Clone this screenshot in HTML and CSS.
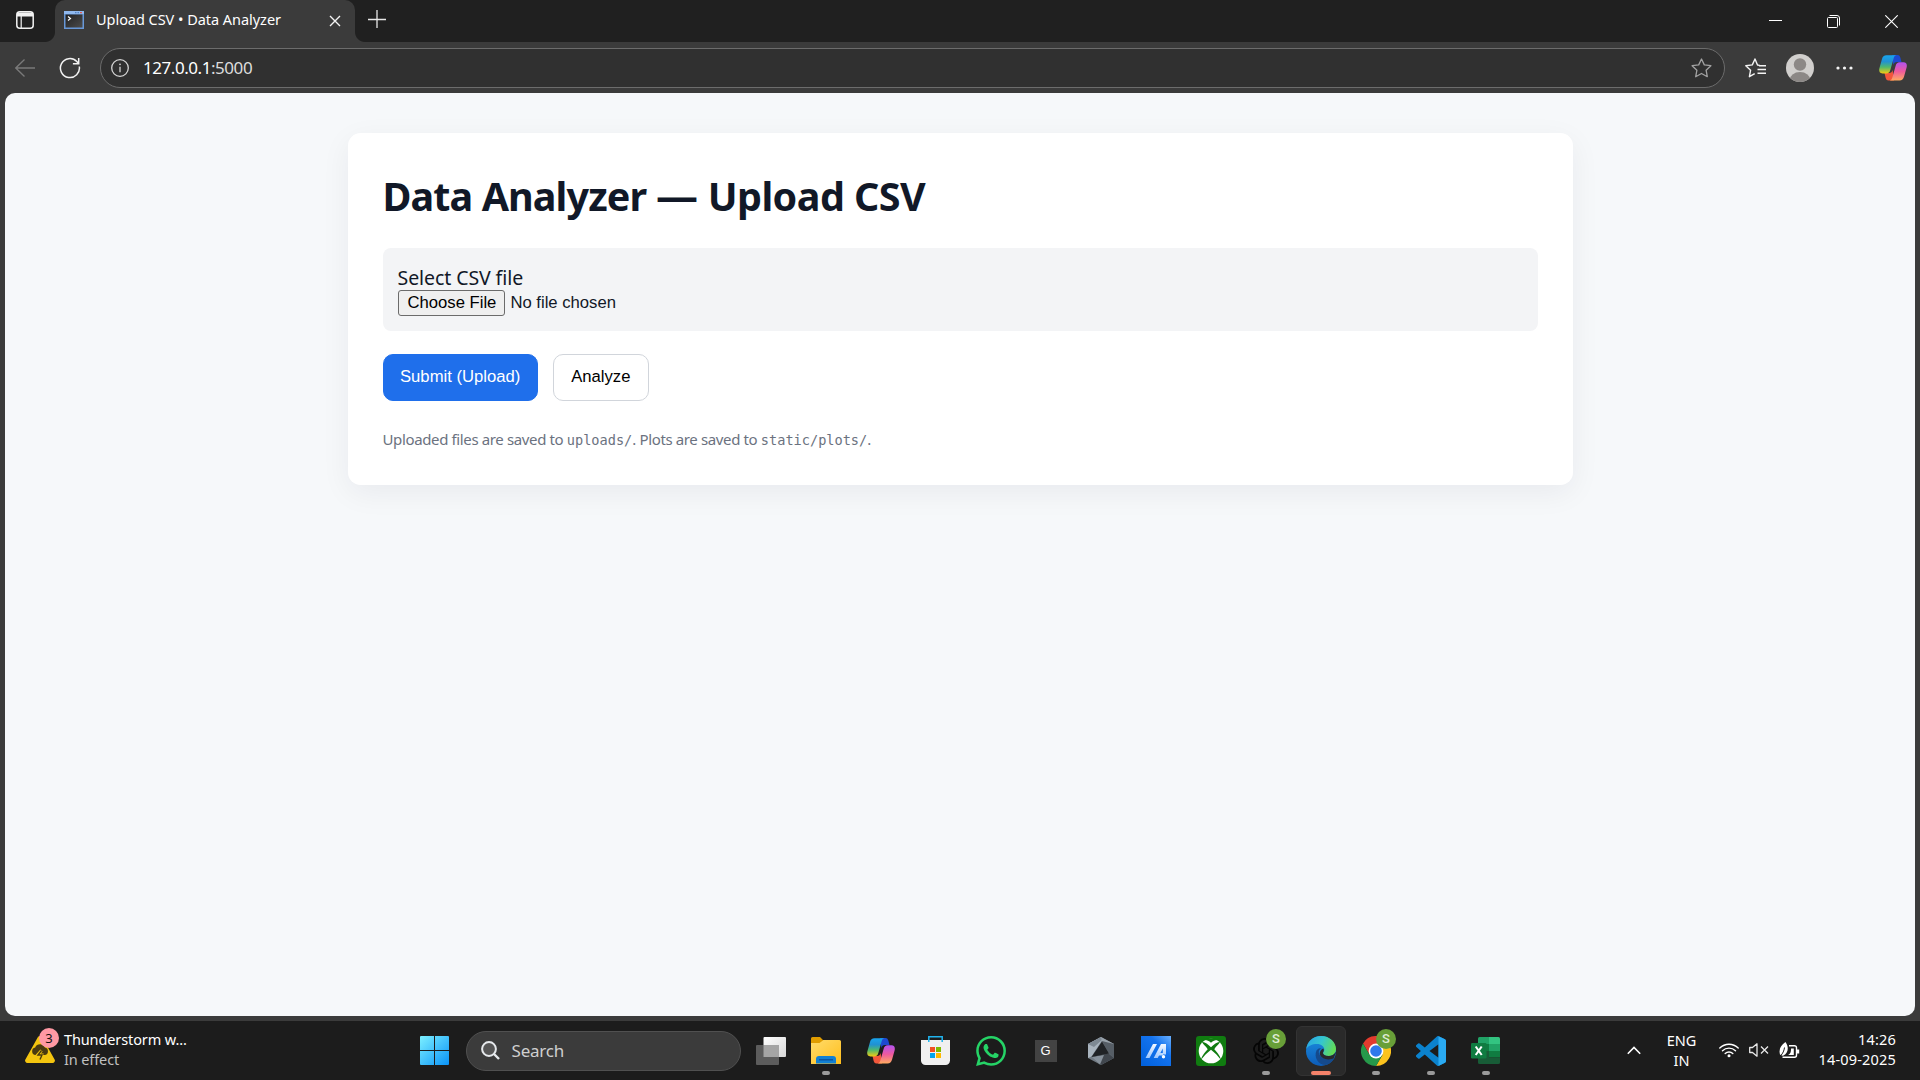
FILE: index.html
```html
<!DOCTYPE html>
<html lang="en">
<head>
<meta charset="utf-8">
<title>Upload CSV • Data Analyzer</title>
<link rel="stylesheet" href="styles.css">
</head>
<body>
<div class="screen">
  <header class="tabbar">
    <div class="tab-actions">
      <svg width="18" height="18" viewBox="0 0 18 18" fill="none" stroke="#f2f2f2"><rect x=".8" y=".8" width="16.4" height="16.4" rx="3" stroke-width="1.5"/><path d="M1 1.5h16v4H1z" fill="#f2f2f2" stroke="none"/><path d="M5.2 5v12" stroke-width="1.2"/></svg>
    </div>
    <div class="tab">
      <svg class="favicon" width="20" height="18" viewBox="0 0 20 18"><defs><linearGradient id="term" x1="0" y1="0" x2="1" y2="1"><stop stop-color="#202020"/><stop offset="1" stop-color="#4c4c4c"/></linearGradient></defs><rect width="20" height="18" fill="#6898d8"/><path d="M0 0h20v3H0z" fill="#8fb8ee"/><path d="M16 1h2v1.3h-2z" fill="#e05a50"/><path d="M11 1h1.5v1.3H11zM13.5 1H15v1.3h-1.5z" fill="#4f7fc0"/><rect x="1.5" y="3.5" width="17" height="13" fill="url(#term)"/><path d="M4 5.5l2.5 2L4 9.5" fill="none" stroke="#fff" stroke-width="1.2"/></svg>
      <span class="tab-title">Upload CSV • Data Analyzer</span>
      <svg class="tab-close" width="12" height="12" viewBox="0 0 12 12" stroke="#f4f4f4" stroke-width="1.4"><path d="M1 1l10 10M11 1L1 11"/></svg>
    </div>
    <svg class="new-tab" width="18" height="18" viewBox="0 0 18 18" stroke="#e8e8e8" stroke-width="1.3"><path d="M9 0v18M0 9.5h18"/></svg>
    <div class="window-controls">
      <svg width="13" height="13" viewBox="0 0 13 13" stroke="#fff" fill="none"><path d="M0 5.5h13"/></svg>
      <svg width="13" height="13" viewBox="0 0 13 13" stroke="#fff" fill="none"><rect x=".5" y="2.5" width="10" height="10" rx="1"/><path d="M2.5.5H10a2.5 2.5 0 0 1 2.5 2.5v7.5"/></svg>
      <svg width="13" height="13" viewBox="0 0 13 13" stroke="#fff" fill="none" stroke-width="1.1"><path d="M.3.3l12.4 12.4M12.7.3L.3 12.7"/></svg>
    </div>
  </header>

  <nav class="toolbar">
    <svg class="back" width="20" height="18" viewBox="0 0 20 18" fill="none" stroke="#7a7a7a" stroke-width="1.3"><path d="M20 9H.8M9.5.5L.8 9l8.7 8.5"/></svg>
    <svg class="reload" width="22" height="22" viewBox="0 0 22 22" fill="none" stroke="#f2f2f2" stroke-width="1.5"><path d="M20.3 9.500A9.500 9.500 0 1 1 17.800 4.500L19.500 6.500M19.700 1v5.800h-5.800"/></svg>
    <div class="address">
      <svg width="18" height="18" viewBox="0 0 18 18" fill="none" stroke="#d4d4d4" stroke-width="1.3"><circle cx="9" cy="9" r="8.3"/><path d="M9 7.8V13.3"/><circle cx="9" cy="5.3" r=".9" fill="#d4d4d4" stroke="none"/></svg>
      <span class="url"><b>127.0.0.1</b><span class="port">:5000</span></span>
      <svg class="star" width="21" height="20" viewBox="0 0 21 20" fill="none" stroke="#a2a2a2" stroke-width="1.3" stroke-linejoin="round"><path d="M10.500 1l2.800 5.900 6.600.8-4.800 4.500 1.200 6.500-5.800-3.200-5.800 3.200 1.200-6.500L1.100 7.700l6.600-.8z"/></svg>
    </div>
    <div class="toolbar-actions">
      <svg class="favorites" width="21" height="20" viewBox="0 0 21 20" fill="none" stroke="#f4f4f4" stroke-width="1.4" stroke-linejoin="round"><path d="M14.500 7.300l-2-.3L10 1 7.300 6.900l-6.500.8 4.800 4.500L4.400 18.700l5.300-3M14 7.800h7M12.500 11.500H21M12.500 15.300H21"/></svg>
      <svg class="avatar" width="28" height="28" viewBox="0 0 28 28"><defs><clipPath id="av"><circle cx="14" cy="14" r="14"/></clipPath></defs><g clip-path="url(#av)"><path d="M0 0h28v28H0z" fill="#d1cfcd"/><circle cx="14" cy="10.5" r="6.2" fill="#8c8886"/><ellipse cx="14" cy="26.5" rx="10.5" ry="8.5" fill="#8c8886"/></g></svg>
      <svg class="more" width="17" height="4" viewBox="0 0 17 4" fill="#f4f4f4"><circle cx="2" cy="2" r="1.6"/><circle cx="8.5" cy="2" r="1.6"/><circle cx="15" cy="2" r="1.6"/></svg>
      <svg width="28" height="26" viewBox="0 0 28 26">
        <defs>
          <linearGradient id="cpA" x1="0" y1="0" x2="0" y2="1"><stop offset="0" stop-color="#18a5ee"/><stop offset=".35" stop-color="#2191d2"/><stop offset=".65" stop-color="#4fb96c"/><stop offset="1" stop-color="#f0cb13"/></linearGradient>
          <linearGradient id="cpB" x1="0" y1="0" x2="0" y2="1"><stop offset="0" stop-color="#b252f0"/><stop offset=".5" stop-color="#ef5a9d"/><stop offset="1" stop-color="#ffab60"/></linearGradient>
          <g id="copilot"><path d="M13 0h5.500c1.800 0 2.400 1.200 2.900 2.800L22.500 7H18c-2.300 0-3 1-3.600 3z" fill="#1d49d0"/><path d="M15 25.500H9.500c-1.800 0-2.400-1.200-2.900-2.800L5.500 18H10c2.300 0 3-1 3.600-3z" fill="#f2573b"/><path d="M7.500.3h9.800c-1.600.3-2.200 1.500-2.700 3.200l-3.200 11.200c-.7 2.600-1.800 3.700-4.200 3.700H3.500C.5 18.400-.3 16 .4 13.300L3 4C3.700 1.600 5 .3 7.500.3z" fill="url(#cpA)"/><path d="M20.500 25.500h-9.800c1.600-.3 2.200-1.500 2.700-3.200L16.600 11c.7-2.600 1.800-3.700 4.200-3.700h3.700c3 0 3.800 2.400 3.100 5.100L25 21.800c-.7 2.400-2 3.700-4.500 3.700z" fill="url(#cpB)"/></g>
        </defs>
        <use href="#copilot"/>
      </svg>
    </div>
  </nav>

  <div class="viewport">
    <main class="card">
      <h1><span class="name">Data Analyzer</span> <span class="dash">—</span> Upload CSV</h1>
      <div class="file-zone">
        <label for="csv">Select CSV file</label>
        <input id="csv" type="file">
      </div>
      <div class="actions">
        <button class="btn primary" type="button">Submit (Upload)</button>
        <button class="btn" type="button">Analyze</button>
      </div>
      <p class="hint">Uploaded files are saved to <code>uploads/</code>. Plots are saved to <code>static/plots/</code>.</p>
    </main>
  </div>

  <footer class="taskbar">
    <div class="weather">
      <div class="weather-icon">
        <svg width="30" height="28" viewBox="0 0 30 28"><path d="M12.800 2.200a2.500 2.500 0 0 1 4.400 0l12.400 22.200A2.400 2.400 0 0 1 27.500 28h-25A2.400 2.400 0 0 1 .4 24.400z" fill="#f4c50f"/><path d="M10.500 20a3.800 3.800 0 0 1-.3-7.500 5.200 5.200 0 0 1 9.700 0 3.800 3.800 0 0 1-.3 7.500z" fill="#4a3a10"/><path d="M16.500 15.500l-4 4.500h4l-2 5" fill="none" stroke="#f4c50f" stroke-width="3"/><path d="M16.500 15.500l-3.500 4.500h4l-2 4.500" fill="none" stroke="#4a3a10" stroke-width="1.4"/></svg>
        <span class="count">3</span>
      </div>
      <div class="weather-text"><span>Thunderstorm w...</span><span class="muted">In effect</span></div>
    </div>
    <svg class="start" width="29" height="29" viewBox="0 0 29 29"><defs><linearGradient id="win" x1="0" y1="0" x2="1" y2="1"><stop stop-color="#7cf0ff"/><stop offset="1" stop-color="#0a93f8"/></linearGradient></defs><path d="M1 0h13v14H0V1a1 1 0 0 1 1-1zM15 0h13a1 1 0 0 1 1 1v13H15zM0 15h14v14H1a1 1 0 0 1-1-1zM15 15h14v13a1 1 0 0 1-1 1H15z" fill="url(#win)"/></svg>
    <div class="search">
      <svg width="19" height="19" viewBox="0 0 19 19" fill="none" stroke="#e6e9ec" stroke-width="2"><circle cx="8" cy="8" r="6.9" fill="#555"/><path d="M13 13l5 5" stroke-width="2.4"/></svg>
      <span>Search</span>
    </div>
    <div class="apps">
      <div class="app"><svg width="30" height="28" viewBox="0 0 30 28"><defs><linearGradient id="tv" x1="0" y1="0" x2="1" y2="1"><stop stop-color="#fff"/><stop offset="1" stop-color="#d8d8d8"/></linearGradient></defs><rect x="7.5" width="22.5" height="20" rx="1" fill="url(#tv)"/><rect y="8" width="23" height="20" rx="1" fill="#5c5c5c"/><path d="M7.500 8H23v12H7.500z" fill="#a5a5a5"/></svg></div>
      <div class="app running"><svg width="30" height="27" viewBox="0 0 30 27"><defs><linearGradient id="fo" x1="0" y1="0" x2="1" y2="1"><stop stop-color="#ffdc6b"/><stop offset="1" stop-color="#ffbe1c"/></linearGradient></defs><path d="M0 1.500A1.500 1.500 0 0 1 1.500 0H9l3 3h3v7H0z" fill="#e09d00"/><path d="M0 6h8.500l4-3H28.500A1.500 1.500 0 0 1 30 4.500V27H0z" fill="url(#fo)"/><path d="M5 22a3 3 0 0 1 3-3h14a3 3 0 0 1 3 3v4.500H5z" fill="#1180d3"/><path d="M8 22.800h14" stroke="#0b4f9c" stroke-width="1.3"/></svg></div>
      <div class="app"><svg width="28" height="26" viewBox="0 0 28 26"><use href="#copilot"/></svg></div>
      <div class="app"><svg width="29" height="29" viewBox="0 0 29 29"><path d="M0 4h29v20.500a4.500 4.500 0 0 1-4.500 4.500h-20A4.500 4.500 0 0 1 0 24.500z" fill="#f0f0f0"/><path d="M7.800 6V.8h13.400V6" fill="none" stroke="#20b4ee" stroke-width="1.5"/><path d="M9 11h5v5H9z" fill="#f25022"/><path d="M15 11h5v5h-5z" fill="#7fba00"/><path d="M9 17h5v5H9z" fill="#00a4ef"/><path d="M15 17h5v5h-5z" fill="#ffb900"/></svg></div>
      <div class="app"><svg width="30" height="30" viewBox="0 0 24 24" fill="#25d366"><path d="M17.472 14.382c-.297-.149-1.758-.867-2.030-.967-.273-.099-.471-.148-.670.150-.197.297-.767.966-.940 1.164-.173.199-.347.223-.644.075-.297-.150-1.255-.463-2.390-1.475-.883-.788-1.480-1.761-1.653-2.059-.173-.297-.018-.458.130-.606.134-.133.298-.347.446-.520.149-.174.198-.298.298-.497.099-.198.050-.371-.025-.520-.075-.149-.669-1.612-.916-2.207-.242-.579-.487-.500-.669-.510-.173-.008-.371-.010-.570-.010-.198 0-.520.074-.792.372-.272.297-1.040 1.016-1.040 2.479 0 1.462 1.065 2.875 1.213 3.074.149.198 2.096 3.200 5.077 4.487.709.306 1.262.489 1.694.625.712.227 1.360.195 1.871.118.571-.085 1.758-.719 2.006-1.413.248-.694.248-1.289.173-1.413-.074-.124-.272-.198-.570-.347m-5.421 7.403h-.004a9.870 9.870 0 0 1-5.031-1.378l-.361-.214-3.741.982.998-3.648-.235-.374a9.860 9.860 0 0 1-1.510-5.260c.001-5.450 4.436-9.884 9.888-9.884 2.640 0 5.122 1.030 6.988 2.898a9.825 9.825 0 0 1 2.893 6.994c-.003 5.450-4.437 9.884-9.885 9.884m8.413-18.297A11.815 11.815 0 0 0 12.050 0C5.495 0 .160 5.335.157 11.892c0 2.096.547 4.142 1.588 5.945L.057 24l6.305-1.654a11.882 11.882 0 0 0 5.683 1.448h.005c6.554 0 11.890-5.335 11.893-11.893a11.821 11.821 0 0 0-3.480-8.413z"/></svg></div>
      <div class="app"><span class="g-tile">G</span></div>
      <div class="app"><svg width="26" height="28" viewBox="0 0 26 28"><path d="M13 0l13 7v14l-13 7L0 21V7z" fill="#727b84"/><path d="M13 0L0 7v14l3.500-1.500L14 3.500z" fill="#a9b4be"/><path d="M13 0L0 7l6 3 8-7z" fill="#7e8993"/><path d="M13 0l13 7-3 3-9-6z" fill="#98a2ab"/><path d="M26 7v14l-5-4.500L14 4z" fill="#565e66"/><path d="M3.500 20l17-3.500L26 21l-13 7z" fill="#41474e"/><path d="M3.500 20l8.500 7.500 4-9.500z" fill="#87919b"/><path d="M14 4.500l7 12L3.500 20z" fill="#202326"/></svg></div>
      <div class="app"><svg width="30" height="30" viewBox="0 0 30 30"><defs><linearGradient id="aa" x1="1" y1="0" x2="0" y2="1"><stop stop-color="#6ab1ff"/><stop offset=".35" stop-color="#1473ee"/><stop offset="1" stop-color="#0060dc"/></linearGradient><linearGradient id="ab" x1="0" y1="0" x2="0" y2="1"><stop stop-color="#f4f9ff"/><stop offset="1" stop-color="#9cc6ff"/></linearGradient></defs><path d="M0 0h30v30H0z" fill="url(#aa)"/><path d="M12 8h4L8.500 22h-4zM20 8h5v10.500h-3.200v-6L16.700 22h-4z" fill="url(#ab)"/><path d="M17 17h5v2.500h-5z" fill="#b9d8ff"/><circle cx="22.500" cy="20.700" r="1.700" fill="#fff"/></svg></div>
      <div class="app"><svg width="30" height="30" viewBox="0 0 30 30"><rect width="30" height="30" rx="3" fill="#107c10"/><circle cx="15" cy="15" r="12.3" fill="#fff"/><path d="M15 6.700C12.500 4.500 9.500 3.300 7.500 4.300 10 1.800 20 1.800 22.500 4.300c-2-1-5 .2-7.500 2.400zM6.300 6c2-.5 5.500 2 8.700 5.200C18.200 8 21.700 5.500 23.700 6c1 .5-3 3.500-5.400 7.200 3.700 4 6.900 8.300 6.200 10.400-1.300-2.600-5.700-6.900-9.500-9.900-3.800 3-8.200 7.300-9.500 9.900-.7-2.100 2.500-6.400 6.200-10.400C9.300 9.500 5.300 6.500 6.300 6z" fill="#107c10"/></svg></div>
      <div class="app running"><svg width="26" height="26" viewBox="0 0 24 24" fill="#050505"><path d="M22.282 9.821a5.985 5.985 0 0 0-.516-4.911 6.046 6.046 0 0 0-6.510-2.900A6.065 6.065 0 0 0 4.981 4.182a5.985 5.985 0 0 0-3.998 2.900 6.046 6.046 0 0 0 .743 7.097 5.980 5.980 0 0 0 .511 4.911 6.051 6.051 0 0 0 6.515 2.900A5.985 5.985 0 0 0 13.260 24a6.056 6.056 0 0 0 5.772-4.206 5.989 5.989 0 0 0 3.998-2.900 6.056 6.056 0 0 0-.748-7.073zm-9.022 12.608a4.476 4.476 0 0 1-2.876-1.041l.142-.080 4.778-2.758a.795.795 0 0 0 .393-.681v-6.737l2.020 1.169a.071.071 0 0 1 .038.052v5.583a4.504 4.504 0 0 1-4.495 4.494zm-9.661-4.125a4.471 4.471 0 0 1-.535-3.014l.142.085 4.783 2.758a.771.771 0 0 0 .781 0l5.843-3.369v2.332a.080.080 0 0 1-.033.062L9.740 19.950a4.499 4.499 0 0 1-6.141-1.646zM2.341 7.896a4.485 4.485 0 0 1 2.366-1.973V11.600a.766.766 0 0 0 .388.677l5.814 3.354-2.020 1.169a.076.076 0 0 1-.071 0l-4.830-2.787A4.504 4.504 0 0 1 2.341 7.872zm16.596 3.856L13.104 8.364 15.119 7.200a.076.076 0 0 1 .071 0l4.830 2.791a4.494 4.494 0 0 1-.677 8.104v-5.677a.790.790 0 0 0-.407-.667zm2.011-3.023l-.142-.085-4.774-2.782a.776.776 0 0 0-.785 0L9.409 9.230V6.897a.066.066 0 0 1 .028-.062l4.830-2.787a4.499 4.499 0 0 1 6.680 4.660zM8.307 12.863l-2.020-1.164a.080.080 0 0 1-.038-.057V6.074a4.499 4.499 0 0 1 7.376-3.454l-.142.081L8.704 5.459a.795.795 0 0 0-.393.681zm1.098-2.365l2.602-1.500 2.607 1.500v2.999l-2.597 1.500-2.607-1.500z"/></svg><span class="profile">S</span></div>
      <div class="app running active"><svg width="30" height="30" viewBox="0 0 30 30"><defs><linearGradient id="eg" x1="0" y1=".2" x2="1" y2=".5"><stop stop-color="#2aa5e4"/><stop offset=".5" stop-color="#35c6cf"/><stop offset="1" stop-color="#63dc55"/></linearGradient><linearGradient id="eb" x1="0" y1="0" x2="0" y2="1"><stop stop-color="#1b8ee0"/><stop offset="1" stop-color="#0d5cb8"/></linearGradient></defs><circle cx="15" cy="15" r="15" fill="url(#eb)"/><path d="M.2 13C1.500 5 7.500 0 15 0c9 0 15 6.500 15 13 0 4.500-3.500 7-7.500 7-3.500 0-5.500-1.500-5.500-2.800 0-.9 1.300-1.500 1.300-3.700 0-3-3-5.500-7.300-5.500C6 8 2 10 .2 13z" fill="url(#eg)"/><path d="M10.500 14.500C7.500 21 12 29 20 29.100c3.500-1 6.500-3.600 8.300-6.500.4-.8-.3-1.200-1-.8-6 3-12.800.2-14.300-4.300-.8-2.500 1-4.800 2.800-5.500-2.300 0-4.300.8-5.300 2.500z" fill="#154a8c"/><path d="M17 17c0 1.500 2 3 5.500 3 3.300 0 5.800-1.500 7-4l.3 1-2 5c-5 3-12 1-13.700-3-1-3 1-5.500 3-6.500 1.600 1.500.1 3.300-.1 4.500z" fill="#29292b"/></svg></div>
      <div class="app running"><svg width="30" height="30" viewBox="0 0 30 30"><path d="M2 7.500a15 15 0 0 1 26 0H15L8.500 18.700z" fill="#e33b2e"/><path d="M28 7.500A15 15 0 0 1 15 30l6.500-11.300L15 7.500z" fill="#fcc31e"/><path d="M2 7.500A15 15 0 0 0 15 30l6.500-11.300H8.500z" fill="#26994a"/><circle cx="15" cy="15" r="7.4" fill="#fff"/><circle cx="15" cy="15" r="5.8" fill="#2f78ea"/></svg><span class="profile">S</span></div>
      <div class="app running"><svg width="30" height="30" viewBox="0 0 24 24"><path d="M23.150 2.587L18.210.210a1.494 1.494 0 0 0-1.705.290l-9.460 8.630-4.120-3.128a.999.999 0 0 0-1.276.057L.327 7.261A1 1 0 0 0 .326 8.740L3.899 12 .326 15.260a1 1 0 0 0 .001 1.479L1.650 17.940a.999.999 0 0 0 1.276.057l4.120-3.128 9.460 8.630a1.492 1.492 0 0 0 1.704.290l4.942-2.377A1.500 1.500 0 0 0 24 20.060V3.939a1.500 1.500 0 0 0-.850-1.352zm-5.146 14.861L10.826 12l7.178-5.448v10.896z" fill="#0b82cd"/><path d="M18 .1l5.150 2.487A1.500 1.500 0 0 1 24 3.939V20.060a1.500 1.500 0 0 1-.850 1.352L18 23.900z" fill="#2aaaf2"/></svg></div>
      <div class="app running"><svg width="29" height="27" viewBox="0 0 29 27"><path d="M7 1.500A1.500 1.500 0 0 1 8.500 0H18v13.500H7z" fill="#21a366"/><path d="M18 0h9.500A1.500 1.500 0 0 1 29 1.500V7H18z" fill="#33c481"/><path d="M18 7h11v7H18z" fill="#21a366"/><path d="M7 7h11v7H7z" fill="#107c41"/><path d="M18 14h11v6.500H18z" fill="#107c41"/><path d="M7 14h11v6.500h11v5A1.500 1.500 0 0 1 27.500 27h-19A1.500 1.500 0 0 1 7 25.500z" fill="#185c37"/><rect y="6" width="15.5" height="15.5" rx="1.3" fill="#107c41"/><path d="M4.700 9.500l6 8.500M10.700 9.500l-6 8.500" stroke="#fff" stroke-width="2.1"/></svg></div>
    </div>
    <div class="tray">
      <svg class="chevron" width="14" height="9" viewBox="0 0 14 9" fill="none" stroke="#fff" stroke-width="1.6"><path d="M.8 7.800L7 1.500l6.200 6.300"/></svg>
      <div class="lang"><span>ENG</span><span>IN</span></div>
      <svg class="wifi" width="20" height="16" viewBox="0 0 20 16" fill="none" stroke="#fff" stroke-width="1.4" stroke-linecap="round"><path d="M.8 6a13 13 0 0 1 18.400 0M3.500 8.800a9.200 9.200 0 0 1 13 0M6.200 11.500a5.400 5.400 0 0 1 7.600 0"/><circle cx="10" cy="13.8" r="1.5" fill="#fff" stroke="none"/></svg>
      <svg class="sound" width="20" height="14" viewBox="0 0 20 14" fill="none" stroke="#e8e8e8" stroke-width="1.3"><path d="M.7 4.500H3.500L8 .8v12.400L3.500 9.500H.7z" stroke-linejoin="round"/><path d="M12 3.500l7 7M19 3.500l-7 7"/></svg>
      <svg class="battery" width="21" height="17" viewBox="0 0 21 17" fill="none" stroke="#fff" stroke-width="1.4"><path d="M10 3.700h5.500A2 2 0 0 1 17.500 5.700v7.600a2 2 0 0 1-2 2H3.500"/><path d="M18 7.500h2.200v4H18z" fill="#fff" stroke="none"/><path d="M1 12.500C-.5 7 2 3 6.500 0c3.500 5 3 11-2 13.500-1.300.5-2.300 0-3.500-1z" fill="#fff" stroke="none"/><path d="M9 13c3-1.500 3-4 3-6.500h2.800v6.500z" fill="#fff" stroke="none"/><path d="M5.500 5.500C5 9 4 11 1.500 14" stroke="#1c1c1c" stroke-width="1"/></svg>
      <div class="clock"><span>14:26</span><span>14-09-2025</span></div>
    </div>
  </footer>
</div>
</body>
</html>
```
FILE: styles.css
```css
* { box-sizing: border-box; }
body { margin: 0; overflow: hidden; background: #3b3b3b; font-family: "Noto Sans", sans-serif; }
svg { display: block; flex: none; }
.screen { width: 1920px; height: 1080px; display: flex; flex-direction: column; }

/* the two gradients draw the flared feet of the active tab */
.tabbar {
  height: 42px; flex: none; display: flex; align-items: flex-start;
  background:
    radial-gradient(circle at 0 0, #202020 9.5px, #3b3b3b 10.5px) 45px 32px / 10px 10px no-repeat,
    radial-gradient(circle at 100% 0, #202020 9.5px, #3b3b3b 10.5px) 355px 32px / 10px 10px no-repeat,
    #202020;
}
.tab-actions { width: 55px; height: 42px; padding: 11px 0 0 16px; }
.tab { width: 300px; height: 42px; display: flex; align-items: center; padding: 0 14px 3px 9px; background: #3b3b3b; border-radius: 10px 10px 0 0; }
.tab-title { margin: -2px 0 0 12px; color: #fff; font-size: 14.5px; letter-spacing: -.04px; white-space: nowrap; }
.tab-close { margin: 2px 0 0 auto; }
.new-tab { margin: 10px 0 0 13px; }
.window-controls { margin-left: auto; display: flex; gap: 45px; padding: 15px 22px 0 0; }

.toolbar { height: 51px; flex: none; display: flex; align-items: center; background: #3b3b3b; padding: 1px 13px 0 15px; }
.reload { margin-left: 24px; }
.address { width: 1625px; height: 40px; margin-left: 19px; padding: 0 12.5px 0 10px; display: flex; align-items: center; background: #303030; border: 1px solid #6c6c6c; border-radius: 20px; }
.url { margin-left: 14px; margin-top: -1px; color: #dcdcdc; font-size: 17px; letter-spacing: -.45px; }
.url b { color: #fff; font-weight: 400; }
.star { margin-left: auto; }
.toolbar-actions { flex: 1; display: flex; align-items: center; }
.favorites { margin-left: 20px; }
.avatar { margin: 0 22px 0 20px; }
.more { margin-right: auto; }

.viewport { flex: 1; margin: 0 5px 5px; padding-top: 40px; background: #f6f8fa; border-radius: 10px; overflow: hidden; }
.card { width: 1225px; height: 352px; margin: 0 auto; padding: 33px 35px 35px; background: #fff; border-radius: 12.5px; box-shadow: 0 8px 30px rgba(20, 25, 50, .06); color: #111827; }
.card h1 { margin: 0 0 22px; font-size: 39.5px; line-height: 60px; font-weight: 700; letter-spacing: -.54px; white-space: nowrap; }
.name { letter-spacing: -.9px; }
.dash { letter-spacing: 0; font-size: 42px; line-height: 1; }
.file-zone { height: 83px; padding: 17px 15px 14px; background: #f3f4f6; border-radius: 8px; display: flex; flex-direction: column; align-items: flex-start; }
.file-zone label { font-size: 19.5px; line-height: 25px; letter-spacing: -.08px; }
.file-zone input { font: 16.667px "Liberation Sans", sans-serif; height: 26px; width: 340px; padding: 0; }
.file-zone input::file-selector-button { height: 26px; margin: 0 5px 0 0; padding: 0 8px 0 9px; border: 1px solid #6b6b6b; border-radius: 3px; background: #efefef; color: #000; font: inherit; }
.actions { display: flex; gap: 15px; margin-top: 23px; }
.btn { height: 47px; padding: 0 17.3px 2px; border: 1px solid #d1d5db; border-radius: 10px; background: #fff; color: #000; font: 16.667px "Liberation Sans", sans-serif; }
.btn.primary { padding: 0 16.5px 2px; background: #1f6feb; border-color: #1f6feb; color: #fff; }
.hint { margin: 25px 0 0; color: #6b7280; font-size: 15px; line-height: 26px; letter-spacing: -.37px; white-space: nowrap; }
.hint code { font-family: "DejaVu Sans Mono", monospace; font-size: 13.6px; letter-spacing: 0; }

.taskbar { height: 59px; flex: none; display: flex; align-items: center; background: #1c1c1c; color: #fff; }
.weather { width: 419.5px; padding-left: 25px; display: flex; }
.weather-icon { position: relative; width: 39px; padding-top: 6px; }
.count { position: absolute; left: 14px; top: -1px; width: 20px; height: 20px; border-radius: 50%; background: #ff99a4; color: #111; font-size: 13px; line-height: 20px; text-align: center; }
.weather-text { display: flex; flex-direction: column; margin-bottom: 3px; font-size: 14.5px; line-height: 20px; letter-spacing: -.12px; white-space: nowrap; }
.muted { color: #c0c0c0; }
.search { width: 275px; height: 40px; margin-left: 17px; padding-left: 14px; display: flex; align-items: center; gap: 12px; background: #3b3b3b; border: 1px solid #505050; border-radius: 20px; color: #cfcfcf; font-size: 17px; letter-spacing: -.2px; }
.apps { display: flex; margin-left: 2.5px; }
.app { position: relative; width: 55px; height: 50px; display: flex; align-items: center; justify-content: center; }
.app.active { width: 50px; margin: 0 2.5px; background: #2a2a2a; border: 1px solid #333; border-radius: 6px; }
.running::after { content: ""; position: absolute; left: 50%; bottom: 1px; width: 8px; height: 4px; margin-left: -4px; border-radius: 2px; background: #9a9a9a; }
.active::after { width: 20px; margin-left: -10px; bottom: 0; background: #f4826a; }
.profile { position: absolute; right: 7px; top: 3.5px; width: 20px; height: 20px; border-radius: 50%; background: #689f38; color: #e0ecd6; font: 500 13px/20px Roboto, sans-serif; text-align: center; }
.g-tile { width: 22px; height: 22px; background: #434343; color: #fff; font: 13px/22px "Liberation Sans", sans-serif; text-align: center; }
.tray { flex: 1; display: flex; align-items: center; padding-bottom: 1px; font-size: 14.5px; line-height: 20px; }
.chevron { margin-left: auto; }
.lang { width: 30px; margin: 0 22px 0 26px; display: flex; flex-direction: column; align-items: center; }
.sound { margin: 0 10px; }
.clock { display: flex; flex-direction: column; align-items: flex-end; margin: 0 24px 2px 19px; letter-spacing: .18px; white-space: nowrap; }
```
